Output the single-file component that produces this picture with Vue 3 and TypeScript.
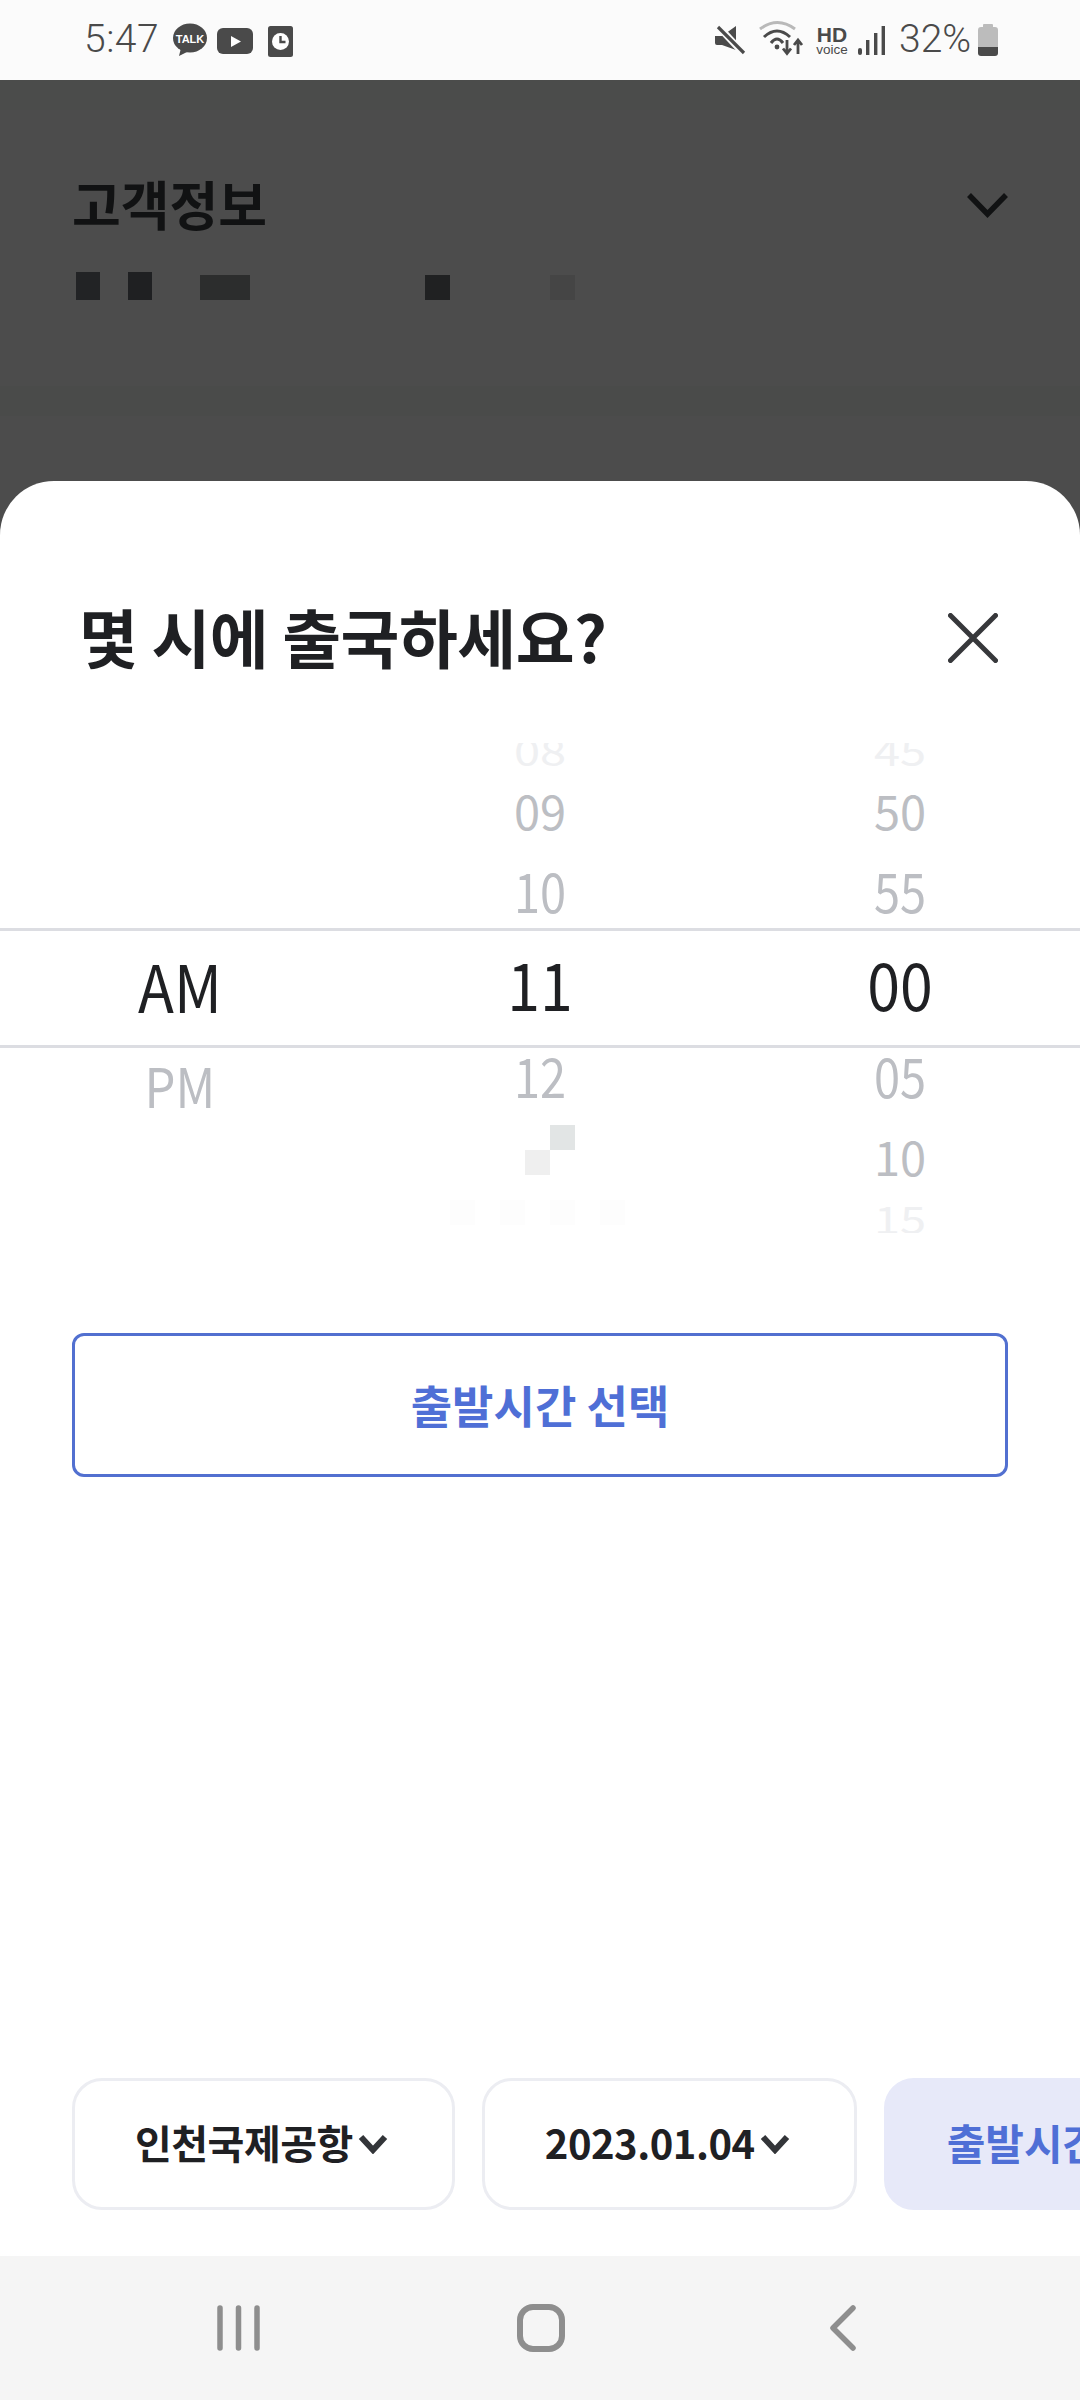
<script setup lang="ts">
interface WheelItem {
  text: string
  height: number
  size: number
  stretch: number
  color: string
}

const grey = '#bcbec3'
const faint = '#eff0f2'
const dark = '#1f2023'

const meridiem: WheelItem[] = [
  { text: '', height: 216, size: 59, stretch: 1, color: dark },
  { text: 'AM', height: 92, size: 59, stretch: 1.12, color: dark },
  { text: 'PM', height: 106, size: 49, stretch: 1.12, color: grey },
]
const hours: WheelItem[] = [
  { text: '08', height: 54, size: 47, stretch: 0.8, color: faint },
  { text: '09', height: 66, size: 47, stretch: 1.0, color: grey },
  { text: '10', height: 94, size: 47, stretch: 1.15, color: grey },
  { text: '11', height: 92, size: 59, stretch: 1.12, color: dark },
  { text: '12', height: 92, size: 47, stretch: 1.15, color: grey },
]
const minutes: WheelItem[] = [
  { text: '45', height: 54, size: 47, stretch: 0.8, color: faint },
  { text: '50', height: 66, size: 47, stretch: 1.0, color: grey },
  { text: '55', height: 94, size: 47, stretch: 1.15, color: grey },
  { text: '00', height: 92, size: 59, stretch: 1.12, color: dark },
  { text: '05', height: 92, size: 47, stretch: 1.15, color: grey },
  { text: '10', height: 70, size: 47, stretch: 1.0, color: grey },
  { text: '15', height: 54, size: 47, stretch: 0.8, color: faint },
]
const columns = [meridiem, hours, minutes]

function itemStyle(item: WheelItem) {
  return {
    height: `${item.height}px`,
    fontSize: `${item.size}px`,
    color: item.color,
    transform: `scaleY(${item.stretch})`,
  }
}
</script>

<template>
  <div class="page">
    <header class="status">
      <div class="status-left">
        <span class="clock">5:47</span>
        <svg class="ic-talk" width="36" height="34" viewBox="0 0 36 34">
          <ellipse cx="18" cy="15" rx="17" ry="14.5" fill="#4a4a4a" />
          <path d="M9 25 L7 33 L17 28 Z" fill="#4a4a4a" />
          <text x="18" y="19.5" text-anchor="middle" class="talk-label">TALK</text>
        </svg>
        <svg class="ic-yt" width="36" height="26" viewBox="0 0 36 26">
          <rect x="0" y="0" width="36" height="26" rx="6" fill="#4a4a4a" />
          <path d="M14 8 L24 13.5 L14 19 Z" fill="#fff" />
        </svg>
        <svg class="ic-clock" width="25" height="31" viewBox="0 0 25 31">
          <rect x="0" y="0" width="25" height="31" rx="2.5" fill="#4a4a4a" />
          <circle cx="12.5" cy="15.5" r="8.5" fill="#fff" />
          <path d="M12.5 10 V16 H17.5" fill="none" stroke="#4a4a4a" stroke-width="2.4" />
        </svg>
      </div>
      <div class="status-right">
        <svg class="ic-mute" width="32" height="32" viewBox="0 0 32 32">
          <path d="M1 12 H8 L22 2 V26 L8 21 H3 Q1 21 1 19 Z" fill="#4a4a4a" />
          <path d="M3 1 L30 30" stroke="#fbfbfb" stroke-width="7" />
          <path d="M4 3 L30 29" stroke="#4a4a4a" stroke-width="3.2" />
        </svg>
        <svg class="ic-wifi" width="48" height="38" viewBox="0 0 48 38">
          <path d="M3 10 Q20.5 -3 38 10" fill="none" stroke="#b9b9b9" stroke-width="3" />
          <path d="M7 18 Q20 6 33 18" fill="none" stroke="#4a4a4a" stroke-width="3" />
          <path d="M14 24 Q20 16 26 24" fill="none" stroke="#4a4a4a" stroke-width="3" />
          <circle cx="20" cy="28" r="2.4" fill="#4a4a4a" />
          <path d="M30 21 V34 M26 29.5 L30 34.5 L34 29.5" fill="none" stroke="#4a4a4a" stroke-width="2.8" />
          <path d="M41 35 V21 M37 26 L41 21 L45 26" fill="none" stroke="#4a4a4a" stroke-width="2.8" />
        </svg>
        <div class="hd"><span class="hd-big">HD</span><span class="hd-small">voice</span></div>
        <svg class="ic-signal" width="27" height="29" viewBox="0 0 27 29">
          <rect x="0" y="22" width="4" height="7" rx="2" fill="#4a4a4a" />
          <rect x="8" y="14" width="3.4" height="15" fill="#4a4a4a" />
          <rect x="16" y="7" width="3.4" height="22" fill="#4a4a4a" />
          <rect x="23.6" y="0" width="3.4" height="29" fill="#4a4a4a" />
        </svg>
        <span class="percent">32%</span>
        <svg class="ic-batt" width="20" height="32" viewBox="0 0 20 32">
          <path d="M6 0 H14 Q15 0 15 1 V3 H17 Q20 3 20 6 V23 H0 V6 Q0 3 3 3 H5 V1 Q5 0 6 0 Z" fill="#bcbcbc" />
          <path d="M0 23 H20 V29 Q20 32 17 32 H3 Q0 32 0 29 Z" fill="#4a4a4a" />
        </svg>
      </div>
    </header>

    <main class="stage">
      <section class="backdrop">
        <div class="top-band"></div>
        <div class="info-head">
          <h2 class="info-title">고객정보</h2>
          <svg class="info-chevron" width="41" height="26" viewBox="0 0 41 26">
            <path d="M2 3 L20.5 22 L39 3" fill="none" stroke="#111213" stroke-width="5.5" />
          </svg>
        </div>
        <div class="mosaic-row">
          <i class="m m1"></i><i class="m m2"></i><i class="m m3"></i><i class="m m4"></i><i class="m m5"></i>
        </div>
        <div class="band"></div>
      </section>

      <section class="sheet">
        <div class="sheet-head">
          <h1 class="sheet-title">몇 시에 출국하세요?</h1>
          <svg class="close" width="50" height="50" viewBox="0 0 50 50">
            <path d="M2.500 2.500 L47.500 47.500 M47.500 2.500 L2.500 47.500" fill="none" stroke="#37383b" stroke-width="5" stroke-linecap="round" />
          </svg>
        </div>

        <div class="wheel">
          <div v-for="(col, i) in columns" :key="i" class="wheel-col">
            <div v-for="(item, j) in col" :key="j" class="wheel-item" :style="itemStyle(item)">{{ item.text }}</div>
          </div>
          <div class="rule rule-top"></div>
          <div class="rule rule-bottom"></div>
          <i class="px px-a"></i>
          <i class="px px-b"></i>
          <i class="px px-c px-c1"></i>
          <i class="px px-c px-c2"></i>
          <i class="px px-c px-c3"></i>
          <i class="px px-c px-c4"></i>
        </div>

        <button class="pick" type="button">출발시간 선택</button>

        <div class="chips">
          <div class="chip">
            <span>인천국제공항</span>
            <svg width="30" height="20" viewBox="0 0 30 20"><path d="M3 3 L15 16 L27 3" fill="none" stroke="#333539" stroke-width="6" /></svg>
          </div>
          <div class="chip">
            <span>2023.01.04</span>
            <svg width="30" height="20" viewBox="0 0 30 20"><path d="M3 3 L15 16 L27 3" fill="none" stroke="#333539" stroke-width="6" /></svg>
          </div>
          <div class="chip chip-active"><span>출발시간</span></div>
        </div>
      </section>
    </main>

    <nav class="navbar">
      <svg class="nav-recent" width="43" height="46" viewBox="0 0 43 46">
        <path d="M3 3 V43 M21.500 3 V43 M40 3 V43" fill="none" stroke="#8e8e8e" stroke-width="5.500" stroke-linecap="round" />
      </svg>
      <svg class="nav-home" width="48" height="48" viewBox="0 0 48 48">
        <rect x="3" y="3" width="42" height="42" rx="13" fill="none" stroke="#8e8e8e" stroke-width="6" />
      </svg>
      <svg class="nav-back" width="26" height="46" viewBox="0 0 26 46">
        <path d="M23 3 L3 23 L23 43" fill="none" stroke="#8e8e8e" stroke-width="5.500" stroke-linecap="round" stroke-linejoin="round" />
      </svg>
    </nav>
  </div>
</template>

<style>
html, body { margin: 0; padding: 0; background: #fff; }
</style>

<style scoped>
.page {
  width: 1080px;
  height: 2400px;
  display: flex;
  flex-direction: column;
  overflow: hidden;
  font-family: "Noto Sans CJK KR", "Noto Sans", sans-serif;
}

/* status bar */
.status {
  height: 80px;
  flex: none;
  background: #fbfbfb;
  color: #4a4a4a;
  display: flex;
  justify-content: space-between;
  align-items: center;
  padding: 0 82px 0 84px;
  box-sizing: border-box;
  font-family: Roboto, "Noto Sans", sans-serif;
}
.status-left, .status-right { display: flex; align-items: center; }
.clock { font-size: 39px; line-height: 80px; width: 88px; font-weight: 300; letter-spacing: 0.5px; margin-top: -2px; }
.ic-yt { margin-left: 9px; margin-top: 2px; }
.ic-clock { margin-left: 15px; margin-top: 2px; }
.ic-talk { margin-top: -1px; }
.talk-label { font: 700 11px "Liberation Sans", sans-serif; fill: #fff; }
.ic-wifi { margin-left: 11px; margin-top: -4px; }
.hd { display: flex; flex-direction: column; align-items: center; width: 32px; margin-left: 11px; font-family: "Liberation Sans", sans-serif; }
.hd-big { font-size: 21px; font-weight: 700; line-height: 18px; }
.hd-small { font-size: 13.500px; line-height: 11px; }
.ic-signal { margin-left: 10px; }
.percent { font-size: 39px; margin-left: 14px; width: 79px; font-weight: 300; margin-top: -2px; }

/* dimmed page behind the sheet */
.stage { flex: 1; position: relative; overflow: hidden; background: #4c4c4c; }
.backdrop { height: 401px; position: relative; }
.top-band { height: 30px; background: #4b4c4b; }
.info-head {
  display: flex;
  justify-content: space-between;
  align-items: center;
  height: 60px;
  padding: 63px 72px 0 72px;
}
.info-title { margin: 0; font-size: 53px; font-weight: 700; color: #111213; line-height: 60px; }
.info-chevron { margin-top: 4px; }
.mosaic-row { display: flex; margin-top: 42px; padding-left: 76px; align-items: flex-start; }
.m { display: block; height: 25px; width: 25px; flex: none; }
.m1 { background: #222325; width: 24px; height: 28px; margin-top: -3px; }
.m2 { background: #1f2022; width: 24px; height: 28px; margin-top: -3px; margin-left: 28px; }
.m3 { background: #2c2d2d; width: 50px; margin-left: 48px; }
.m4 { background: #202122; margin-left: 175px; }
.m5 { background: #454545; margin-left: 100px; }
.band { height: 30px; margin-top: 86px; background: #4a4b4a; }

/* bottom sheet */
.sheet {
  position: absolute;
  left: 0;
  right: 0;
  top: 401px;
  bottom: 0;
  background: #fff;
  border-radius: 54px 54px 0 0;
  display: flex;
  flex-direction: column;
}
.sheet-head {
  display: flex;
  justify-content: space-between;
  align-items: center;
  height: 80px;
  padding: 117px 82px 0 79px;
  margin-bottom: 65px;
}
.sheet-title { margin: -6px 0 0; font-size: 64px; font-weight: 700; color: #1f2023; line-height: 80px; letter-spacing: -0.5px; }

/* wheel */
.wheel {
  height: 490px;
  position: relative;
  overflow: hidden;
  display: grid;
  grid-template-columns: repeat(3, 1fr);
  flex: none;
}
.wheel-col { margin-top: -21px; display: flex; flex-direction: column; }
.wheel-item { display: flex; align-items: center; justify-content: center; flex: none; line-height: 1; }
.rule { position: absolute; left: 0; right: 0; height: 3px; background: #dcdde2; }
.rule-top { top: 185px; }
.rule-bottom { top: 302px; }
.px { position: absolute; display: block; width: 25px; height: 25px; }
.px-a { left: 550px; top: 382px; background: #e2e5e5; }
.px-b { left: 525px; top: 407px; background: #efefef; }
.px-c { top: 457px; background: #fdfdfd; }
.px-c1 { left: 450px; }
.px-c2 { left: 500px; }
.px-c3 { left: 550px; }
.px-c4 { left: 600px; }

/* button */
.pick {
  flex: none;
  margin: 100px 72px 0 72px;
  height: 144px;
  background: #fff;
  border: 3px solid #5270d0;
  border-radius: 12px;
  color: #4f6fd6;
  font: 700 45px "Noto Sans CJK KR", "Noto Sans", sans-serif;
  padding: 0 0 2px;
}

/* chips */
.chips {
  margin-top: auto;
  margin-bottom: 46px;
  display: flex;
  gap: 27px;
  padding-left: 72px;
  overflow: hidden;
}
.chip {
  flex: none;
  height: 132px;
  box-sizing: border-box;
  border: 3px solid #ecedf2;
  border-radius: 30px;
  padding: 0 64px 5px 60px;
  display: flex;
  align-items: center;
  gap: 5px;
  background: #fff;
  color: #1f2023;
  font-size: 40px;
  font-weight: 700;
  letter-spacing: -0.5px;
}
.chip svg { margin-top: 5px; }
.chip-active { background: #e7e9f9; border-color: #e7e9f9; color: #4f6fd6; font-size: 42px; letter-spacing: 0; }

/* navigation bar */
.navbar {
  height: 144px;
  flex: none;
  background: #f5f5f5;
  display: flex;
  align-items: center;
  padding-left: 217px;
}
.nav-home { margin-left: 257px; }
.nav-back { margin-left: 265px; }
</style>
